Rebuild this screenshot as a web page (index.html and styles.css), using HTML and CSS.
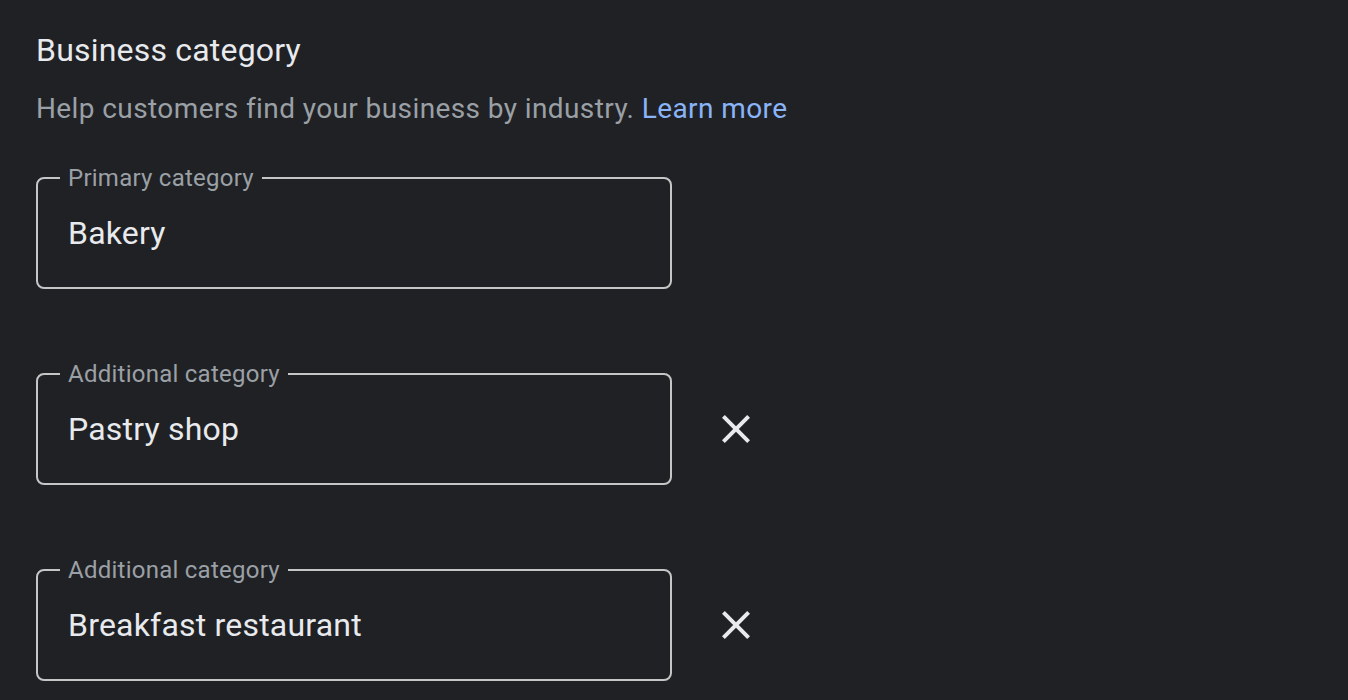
FILE: index.html
```html
<!DOCTYPE html>
<html lang="en">
<head>
<meta charset="utf-8">
<title>Business category</title>
<link rel="stylesheet" href="styles.css">
</head>
<body>
<main class="page">
  <h1 class="title">Business category</h1>
  <p class="subtitle">Help customers find your business by industry. <a class="link" href="#">Learn more</a></p>
  <div class="fields">
    <div class="row">
      <div class="field">
        <span class="field-label">Primary category</span>
        <span class="field-value">Bakery</span>
      </div>
    </div>
    <div class="row">
      <div class="field">
        <span class="field-label">Additional category</span>
        <span class="field-value">Pastry shop</span>
      </div>
      <button class="remove" aria-label="Remove">
        <svg viewBox="0 0 24 24" width="48" height="48"><path d="M19 6.41 17.59 5 12 10.59 6.41 5 5 6.41 10.59 12 5 17.59 6.41 19 12 13.41 17.59 19 19 17.59 13.41 12z" fill="#e8eaed"/></svg>
      </button>
    </div>
    <div class="row">
      <div class="field">
        <span class="field-label">Additional category</span>
        <span class="field-value">Breakfast restaurant</span>
      </div>
      <button class="remove" aria-label="Remove">
        <svg viewBox="0 0 24 24" width="48" height="48"><path d="M19 6.41 17.59 5 12 10.59 6.41 5 5 6.41 10.59 12 5 17.59 6.41 19 12 13.41 17.59 19 19 17.59 13.41 12z" fill="#e8eaed"/></svg>
      </button>
    </div>
  </div>
</main>
</body>
</html>
```

FILE: styles.css
```css
html, body {
  margin: 0;
  padding: 0;
  background: #202124;
}
body {
  font-family: Roboto, "Liberation Sans", Arial, sans-serif;
  color: #e8eaed;
}
.page {
  padding: 30px 36px 0;
}
.title {
  margin: 0;
  font-size: 32px;
  line-height: 40px;
  font-weight: 400;
  letter-spacing: 0.2px;
  color: #e8eaed;
}
.subtitle {
  margin: 19px 0 0;
  font-size: 28px;
  line-height: 40px;
  letter-spacing: 0.4px;
  color: #9aa0a6;
}
.link {
  color: #8ab4f8;
  text-decoration: none;
}
.fields {
  margin-top: 48px;
  display: flex;
  flex-direction: column;
  gap: 84px;
}
.row {
  display: flex;
  align-items: center;
  gap: 40px;
}
.field {
  position: relative;
  box-sizing: border-box;
  width: 636px;
  height: 112px;
  border: 2px solid #c4c7c5;
  border-radius: 8px;
  padding: 0 30px;
  display: flex;
  align-items: center;
}
.field-label {
  position: absolute;
  top: -13px;
  left: 22px;
  padding: 0 8px;
  background: #202124;
  font-size: 24px;
  line-height: 24px;
  letter-spacing: 0.25px;
  color: #9aa0a6;
}
.field-value {
  font-size: 32px;
  line-height: 40px;
  letter-spacing: 0.2px;
  color: #e8eaed;
}
.remove {
  width: 48px;
  height: 48px;
  padding: 0;
  border: 0;
  background: none;
  display: flex;
  align-items: center;
  justify-content: center;
  cursor: pointer;
}
.remove svg {
  display: block;
}
```
